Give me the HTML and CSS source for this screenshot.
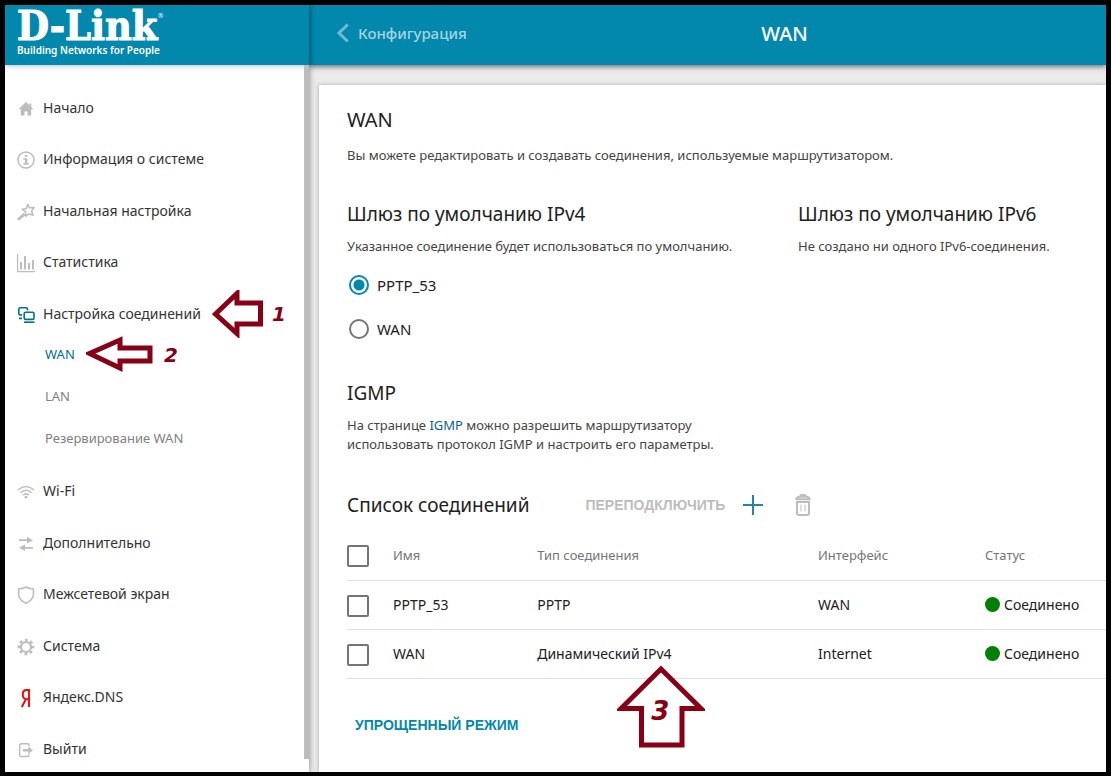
FILE: index.html
```html
<!DOCTYPE html>
<html lang="ru">
<head>
<meta charset="utf-8">
<title>D-Link — WAN</title>
<link rel="stylesheet" href="styles.css">
</head>
<body>
<div class="frame">
  <aside class="sidebar">
    <div class="brand">
      <div class="brand-name">D-Link<span class="brand-mark">®</span></div>
      <div class="brand-tagline">Building Networks for People</div>
    </div>
    <nav class="menu">
      <ul class="menu-list">
        <li><a class="menu-link" href="#"><svg class="icon" viewBox="0 0 18 18"><path fill="currentColor" d="M9 2 1.500 9.300h2.300V15.500h3.700v-4h3v4h3.700V9.300h2.300L14.300 7V3.500h-1.800v1.800z"/></svg>Начало</a></li>
        <li><a class="menu-link" href="#"><svg class="icon" viewBox="0 0 18 18"><circle cx="9" cy="9" r="8" fill="none" stroke="currentColor" stroke-width="1.500"/><path fill="currentColor" d="M7.800 4h2.500v2H7.800zM6.300 7.300h4v5h1.500v1.500H6.300v-1.500h1.500V8.700H6.300z"/></svg>Информация о системе</a></li>
        <li><a class="menu-link" href="#"><svg class="icon" viewBox="0 0 18 18"><path fill="none" stroke="currentColor" stroke-width="1.500" stroke-linejoin="round" d="m10.800 1.400 1.700 3.400 4.600-.2-2.600 3.400 1.600 4.300-4-1.400-3.600 2.300.1-4.300-3.300-2.600 4-.9z"/><path stroke="currentColor" stroke-width="2.800" d="M1 16.800 7.500 11"/></svg>Начальная настройка</a></li>
        <li><a class="menu-link" href="#"><svg class="icon" viewBox="0 0 18 18"><path fill="currentColor" d="M0 0h1.200v17H18v1.200H0zM3 8h2v7.500H3zM7 2h2v13.500H7zM11 9h2v6.500h-2zM15 6h2v9.500h-2z"/></svg>Статистика</a></li>
        <li>
          <a class="menu-link" href="#"><svg class="icon icon-active" viewBox="0 0 18 18"><g fill="none" stroke="currentColor" stroke-width="1.600"><path d="M10.500 4.500V3.200q0-1.400-1.400-1.400H3.200q-1.400 0-1.400 1.400v4.300q0 1.400 1.400 1.400H5M2 12.400h3"/><rect x="7.200" y="6.200" width="9.800" height="7.200" rx="1.400"/><path d="M7 16.200h10.500"/></g></svg>Настройка соединений</a>
          <svg class="mark mark-1" viewBox="0 0 54 48"><path d="M3.500 24 25 3.500V13h23.500v21H25v9.500z"/></svg>
          <span class="digit digit-1">1</span>
          <ul class="submenu">
            <li><a class="submenu-link submenu-current" href="#">WAN</a>
              <svg class="mark mark-2" viewBox="0 0 68 36"><path d="M3.500 17.500 34 4v8h30v13H34v7z"/></svg>
              <span class="digit digit-2">2</span></li>
            <li><a class="submenu-link" href="#">LAN</a></li>
            <li><a class="submenu-link" href="#">Резервирование WAN</a></li>
          </ul>
        </li>
        <li><a class="menu-link" href="#"><svg class="icon" viewBox="0 0 18 18"><g fill="none" stroke="currentColor" stroke-width="1.500"><path d="M1 7q8-7 16 0M3.500 9.700q5.500-5 11 0M6 12.200q3-2.600 6 0"/></g><circle cx="9" cy="14.200" r="1.400" fill="currentColor"/></svg>Wi-Fi</a></li>
        <li><a class="menu-link" href="#"><svg class="icon" viewBox="0 0 18 18"><path fill="currentColor" d="M2 4.300h8V2l6 3.200-6 3.200V6.100H2zM16 11.900H8V9.600l-6 3.200L8 16v-2.300h8z"/></svg>Дополнительно</a></li>
        <li><a class="menu-link" href="#"><svg class="icon" viewBox="0 0 18 18"><path fill="none" stroke="currentColor" stroke-width="1.500" stroke-linejoin="round" d="M9 1Q5.500 3 1.600 2.700v6.100Q2.400 14.500 9 17.200q6.600-2.700 7.400-8.400V2.700Q12.500 3 9 1z"/></svg>Межсетевой экран</a></li>
        <li><a class="menu-link" href="#"><svg class="icon" viewBox="0 0 18 18"><g fill="none" stroke="currentColor"><circle cx="9" cy="9" r="5" stroke-width="2.200"/><circle cx="9" cy="9" r="7" stroke-width="2.600" stroke-dasharray="2.750" stroke-dashoffset="1.370"/></g></svg>Система</a></li>
        <li><a class="menu-link" href="#"><svg class="icon icon-yandex" viewBox="0 0 18 18"><path fill="none" stroke="currentColor" stroke-width="1.900" d="M12 18V1H9.500Q5.800 1 5.800 5.500t3.700 4.600H12M9 10 4.800 18"/></svg>Яндекс.DNS</a></li>
        <li><a class="menu-link" href="#"><svg class="icon" viewBox="0 0 18 18"><path fill="none" stroke="currentColor" stroke-width="1.400" d="M12 5V4q0-1.300-1.300-1.300H4Q2.700 2.700 2.700 4v10.200q0 1.300 1.300 1.300h6.700q1.300 0 1.300-1.300v-1"/><path fill="currentColor" d="M6 8h5.300V5.200l4.500 4-4.500 4v-2.800H6z"/></svg>Выйти</a></li>
      </ul>
      <div class="scroll-thumb"></div>
    </nav>
  </aside>

  <div class="content">
    <header class="topbar">
      <a class="back" href="#"><svg class="back-icon" viewBox="0 0 12 20"><path d="M10.800 1.500 2 10l8.800 8.500"/></svg>Конфигурация</a>
      <div class="topbar-title">WAN</div>
    </header>
    <main class="card">
      <h1 class="title">WAN</h1>
      <p class="text intro">Вы можете редактировать и создавать соединения, используемые маршрутизатором.</p>

      <div class="gateways">
        <section>
          <h2 class="title">Шлюз по умолчанию IPv4</h2>
          <p class="text">Указанное соединение будет использоваться по умолчанию.</p>
          <div class="choices">
            <label class="choice"><input class="radio" type="radio" name="gateway" checked>PPTP_53</label>
            <label class="choice"><input class="radio" type="radio" name="gateway">WAN</label>
          </div>
        </section>
        <section>
          <h2 class="title">Шлюз по умолчанию IPv6</h2>
          <p class="text">Не создано ни одного IPv6-соединения.</p>
        </section>
      </div>

      <section class="igmp">
        <h2 class="title">IGMP</h2>
        <p class="text">На странице <a class="text-link" href="#">IGMP</a> можно разрешить маршрутизатору использовать протокол IGMP и настроить его параметры.</p>
      </section>

      <div class="list-head">
        <h2 class="title">Список соединений</h2>
        <div class="actions">
          <button class="text-button" type="button" disabled>ПЕРЕПОДКЛЮЧИТЬ</button>
          <button class="icon-button" type="button" aria-label="Добавить"><svg class="plus" viewBox="0 0 20 20"><path d="M10 0v20M0 10h20"/></svg></button>
          <button class="icon-button" type="button" aria-label="Удалить" disabled><svg class="trash" viewBox="0 0 18 22"><path d="M2 5Q3 2.800 5.500 2.800h7Q15 2.800 16 5M1.500 5.200h15M6 2.500Q6.500 1 7.500 1h3q1 0 1.500 1.500M3 8v11q0 2 2 2h8q2 0 2-2V8z"/><path class="trash-bars" d="M7 10.500v7M11 10.500v7"/></svg></button>
        </div>
      </div>

      <table class="connections">
        <thead>
          <tr>
            <th class="col-check"><input class="check" type="checkbox" aria-label="Выбрать все"></th>
            <th class="col-name">Имя</th>
            <th class="col-type">Тип соединения</th>
            <th class="col-port">Интерфейс</th>
            <th>Статус</th>
          </tr>
        </thead>
        <tbody>
          <tr>
            <td><input class="check" type="checkbox" aria-label="PPTP_53"></td>
            <td>PPTP_53</td>
            <td>PPTP</td>
            <td>WAN</td>
            <td><span class="status">Соединено</span></td>
          </tr>
          <tr>
            <td><input class="check" type="checkbox" aria-label="WAN"></td>
            <td>WAN</td>
            <td class="marked">Динамический IPv4
              <svg class="mark mark-3" viewBox="0 0 88 84"><path d="M44 4 84 43.500H65V80H24.500V43.500H4z"/></svg>
              <span class="digit digit-3">3</span></td>
            <td>Internet</td>
            <td><span class="status">Соединено</span></td>
          </tr>
        </tbody>
      </table>

      <button class="text-button mode" type="button">УПРОЩЕННЫЙ РЕЖИМ</button>
    </main>
  </div>
</div>
</body>
</html>
```
FILE: styles.css
```css
* { box-sizing: border-box; }

body {
  margin: 0;
  font-family: "Noto Sans", "Open Sans", sans-serif;
  font-size: 14px;
  color: #212121;
  background: #000;
}

ul { list-style: none; margin: 0; padding: 0; }
h1, h2, p { margin: 0; }
a { text-decoration: none; }
button { font: inherit; border: 0; background: none; padding: 0; }

.frame {
  display: flex;
  min-height: 100vh;
  padding: 5px 5px 4px;
}

/* Sidebar */
.sidebar {
  display: flex;
  flex-direction: column;
  flex: 0 0 304px;
  position: relative;
  z-index: 2;
  background: #fff;
  box-shadow: 0 0 6px rgba(0, 0, 0, 0.45);
}

.brand {
  height: 60px;
  padding: 3px 12px 0;
  color: #fff;
  background: #0288ad;
  box-shadow: 0 1px 5px rgba(0, 0, 0, 0.25);
}

.brand-name {
  position: relative;
  width: max-content;
  font-family: "DejaVu Serif Condensed", "DejaVu Serif", serif;
  font-size: 41px;
  font-weight: 700;
  line-height: 36px;
  -webkit-text-stroke: 1px #fff;
}

.brand-mark {
  position: absolute;
  top: 4px;
  left: 100%;
  font-size: 7px;
  font-weight: 400;
  line-height: 8px;
  -webkit-text-stroke: 0;
}

.brand-tagline {
  font-size: 10px;
  font-weight: 600;
  line-height: 12px;
}

.menu {
  position: relative;
  display: flex;
  flex: 1;
  padding: 19px 0 1px;
}

.menu-list {
  display: flex;
  flex: 1;
  flex-direction: column;
  justify-content: space-between;
}

.menu-list > li { position: relative; }

.menu-link {
  display: flex;
  align-items: center;
  gap: 8px;
  height: 46px;
  padding-left: 12px;
  font-size: 14px;
  color: #333;
}

.icon {
  width: 18px;
  height: 18px;
  margin-top: 3px;
  overflow: visible;
  color: #bdbdbd;
}

.icon-active { color: #02708a; }
.icon-yandex { color: #f00; }

.submenu > li {
  position: relative;
  height: 42px;
  padding: 8px 0 0 40px;
}

.submenu-link {
  font-size: 13px;
  line-height: 20px;
  color: #808080;
}

.submenu-current { color: #02708a; }

.scroll-thumb {
  position: absolute;
  top: 0;
  right: 0;
  bottom: 13px;
  width: 5px;
  background: #bdbdbd;
}

/* Tutorial marks drawn over the page */
.mark {
  position: absolute;
  fill: #fff;
  stroke: #880015;
  stroke-width: 5px;
}

.digit {
  position: absolute;
  font-family: "DejaVu Sans", sans-serif;
  font-size: 20px;
  font-style: italic;
  font-weight: 700;
  line-height: 24px;
  color: #880015;
}

.mark-1 { left: 207px; top: 0; width: 54px; height: 48px; }
.digit-1 { left: 267px; top: 12px; }
.mark-2 { left: 81px; top: 0; width: 68px; height: 36px; }
.digit-2 { left: 159px; top: 7px; }
.mark-3 { left: 80px; top: 35px; width: 88px; height: 84px; }
.digit-3 { left: 114px; top: 69px; font-size: 26px; }

/* Content */
.content {
  display: flex;
  flex: 1;
  flex-direction: column;
  min-width: 0;
  background: #ebebeb;
}

.topbar {
  display: grid;
  grid-template-columns: 424fr auto 298fr;
  align-items: center;
  height: 60px;
  padding: 0 0 4px 28px;
  margin-bottom: 20px;
  color: #fff;
  background: #0288ad;
  box-shadow: 0 2px 5px rgba(0, 0, 0, 0.5);
}

.back {
  display: flex;
  align-items: center;
  gap: 9px;
  font-size: 15px;
  font-weight: 500;
  color: #a6d5e2;
}

.back-icon {
  width: 12px;
  height: 20px;
  fill: none;
  stroke: #71bbd0;
  stroke-width: 3px;
}

.topbar-title {
  font-size: 20px;
  font-weight: 500;
}

.card {
  flex: 1;
  margin-left: 10px;
  padding: 21px 0 28px 28px;
  background: #fff;
  box-shadow: 0 0 4px rgba(0, 0, 0, 0.3);
  clip-path: inset(-4px 0 0 -4px);
}

.title {
  font-size: 19px;
  font-weight: 400;
  line-height: 28px;
}

h1.title { font-size: 20px; }

.text {
  margin-top: 9px;
  font-size: 13px;
  line-height: 19px;
  color: #444;
}

.text-link { color: #0a5f92; }

.intro {
  margin-top: 12px;
  margin-bottom: 35px;
}

.gateways {
  display: grid;
  grid-template-columns: 451fr 308fr;
}

.choices { margin-top: 7px; }

.choice {
  display: flex;
  align-items: center;
  gap: 8px;
  height: 44px;
  padding-left: 2px;
  font-size: 15px;
}

.radio {
  appearance: none;
  width: 20px;
  height: 20px;
  margin: 0;
  border: 2px solid #757575;
  border-radius: 50%;
}

.radio:checked {
  border-color: #0288ad;
  background: radial-gradient(circle, #0288ad 5px, transparent 6px);
}

.igmp {
  max-width: 390px;
  margin-top: 28px;
}

.list-head {
  display: flex;
  align-items: center;
  gap: 56px;
  margin-top: 37px;
}

.actions {
  display: flex;
  align-items: center;
}

.text-button {
  font-family: "Liberation Sans", Arial, sans-serif;
  font-size: 14px;
  font-weight: 700;
  color: #0288ad;
}

.text-button:disabled { color: #bdbdbd; }

.icon-button {
  display: flex;
  margin-left: 18px;
}

.icon-button + .icon-button { margin-left: 31px; }

.plus {
  width: 20px;
  height: 20px;
  stroke: #2a849c;
  stroke-width: 2px;
}

.trash {
  width: 18px;
  height: 22px;
  fill: #fff;
  stroke: #bdbdbd;
  stroke-width: 2px;
}

.trash-bars { stroke-width: 1px; }

.connections {
  width: 100%;
  margin-top: 12px;
  border-collapse: collapse;
  table-layout: fixed;
}

.connections th,
.connections td {
  height: 49px;
  padding: 0;
  border-bottom: 1px solid #e0e0e0;
  text-align: left;
  vertical-align: middle;
}

.connections th {
  font-size: 13px;
  font-weight: 400;
  color: #757575;
}

.connections .marked { position: relative; }

.col-check { width: 46px; }
.col-name { width: 19%; }
.col-type { width: 37%; }
.col-port { width: 22%; }

.check {
  display: block;
  appearance: none;
  width: 22px;
  height: 22px;
  margin: 2px 0 0;
  border: 2px solid #757575;
  border-radius: 2px;
}

.status {
  display: flex;
  align-items: center;
  gap: 4px;
}

.status::before {
  content: "";
  width: 15px;
  height: 15px;
  border-radius: 50%;
  background: #008000;
}

.mode {
  height: 36px;
  margin-top: 28px;
  padding: 0 8px;
}
```
